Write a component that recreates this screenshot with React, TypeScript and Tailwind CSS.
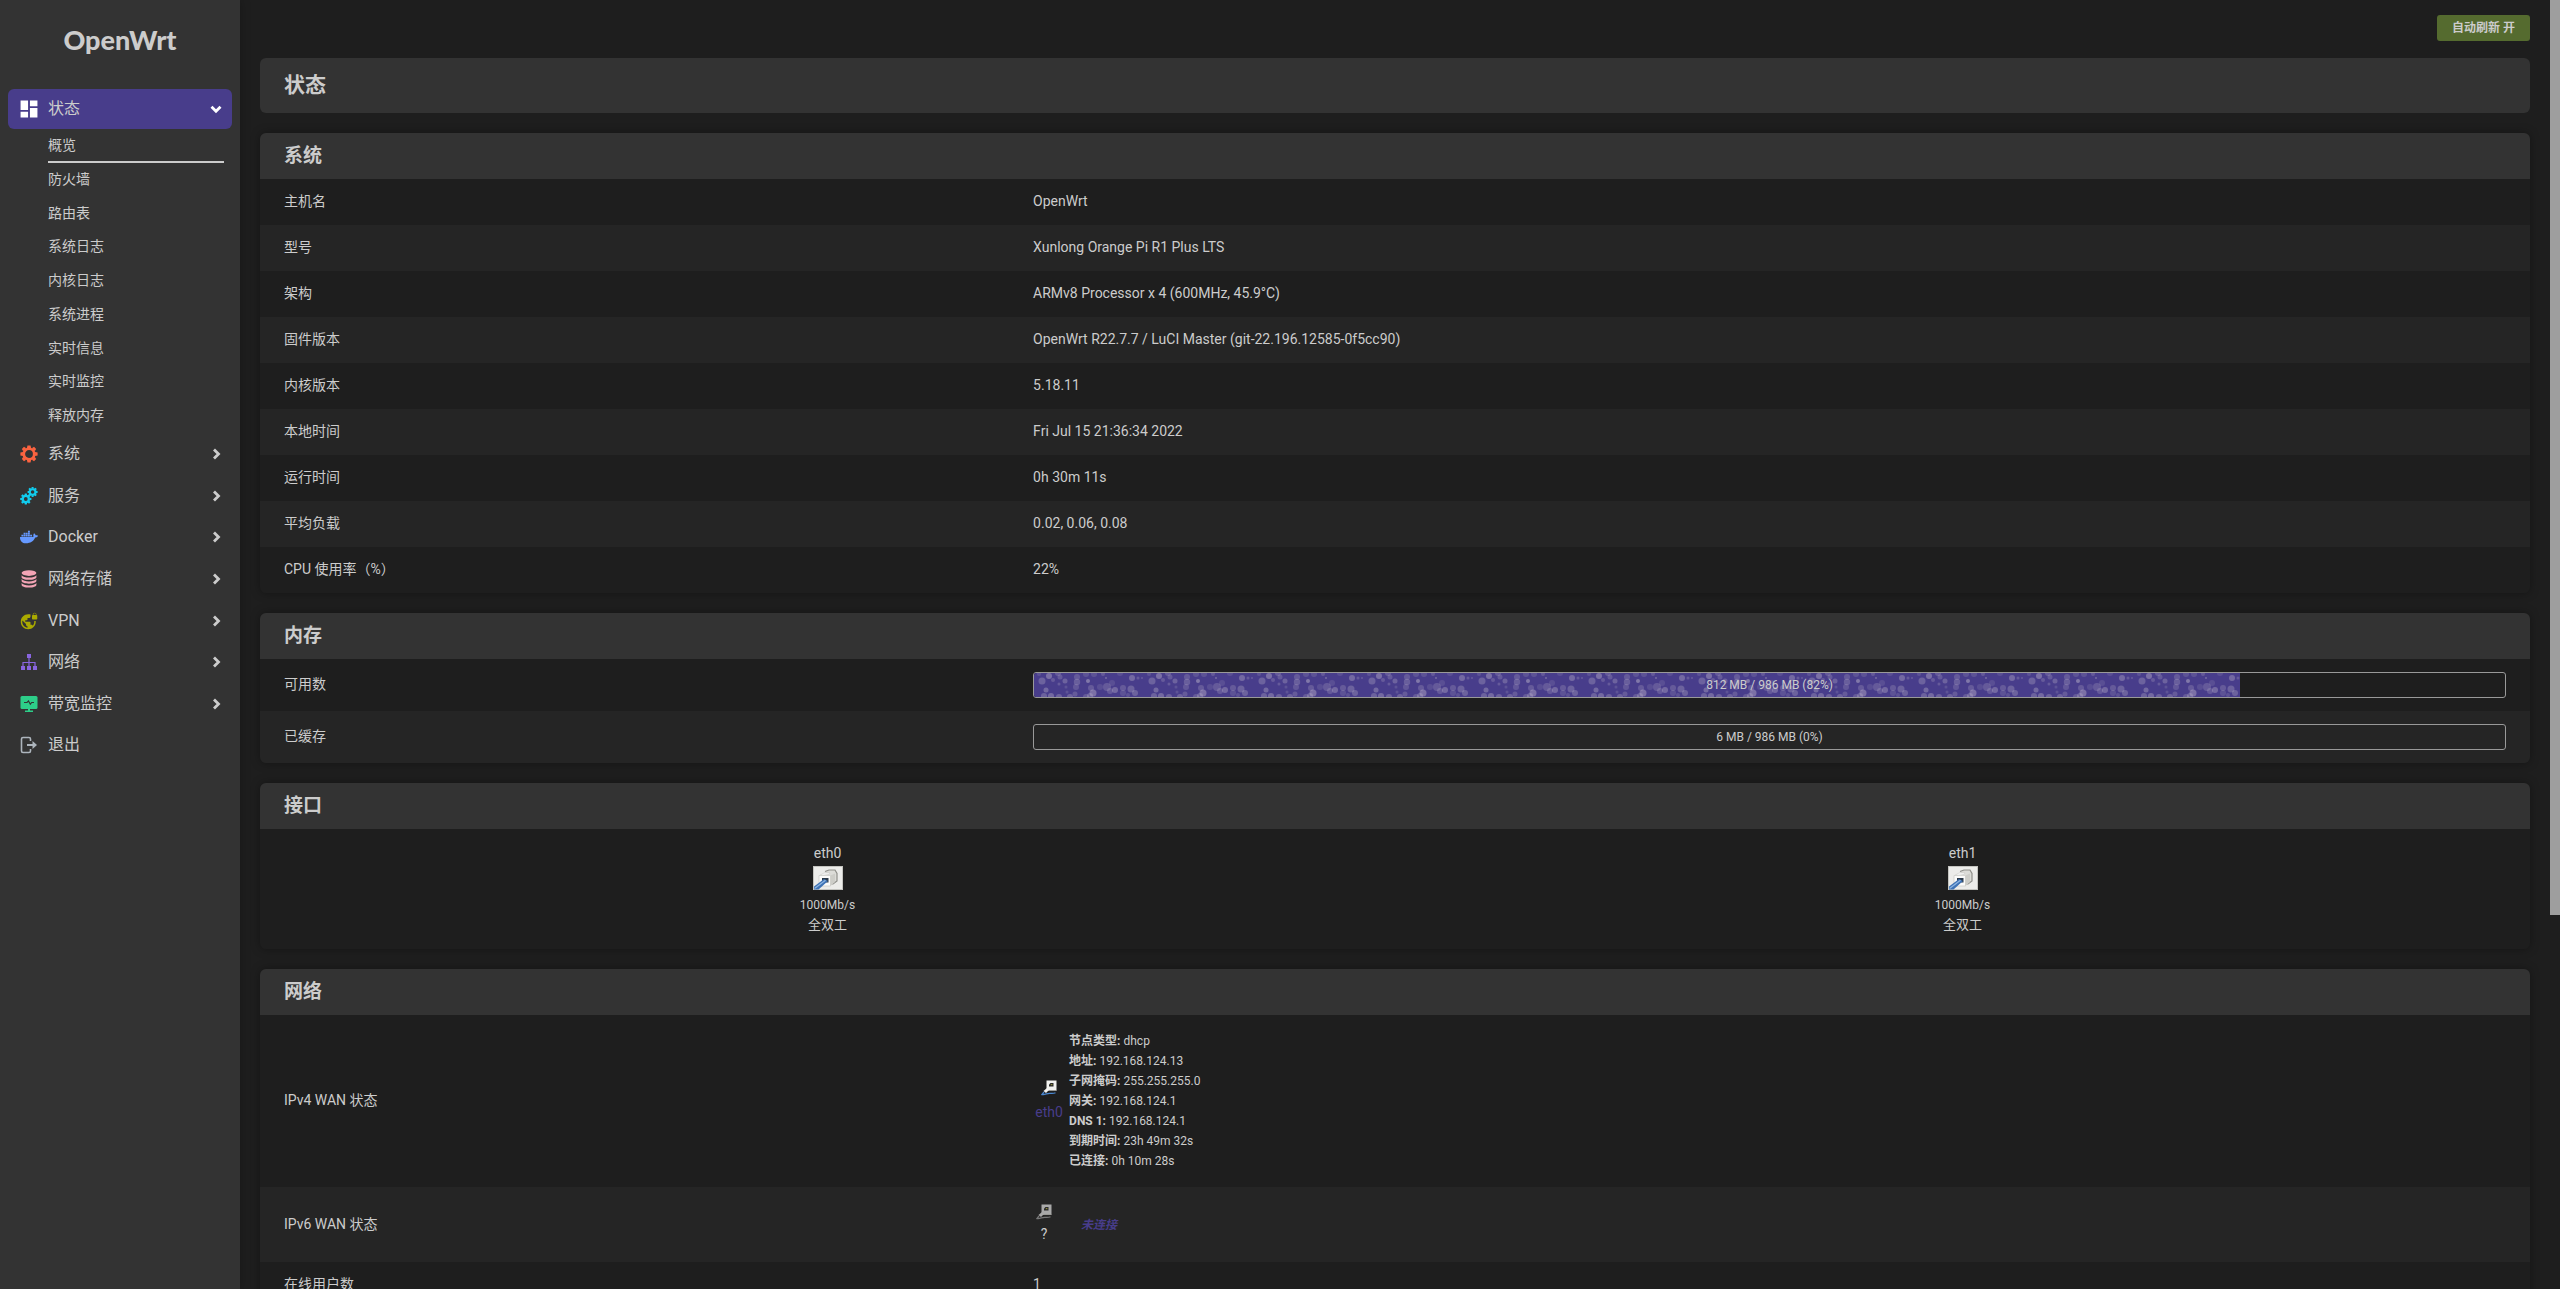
import type { ReactNode } from "react";
import { FaDocker } from "react-icons/fa";
import { MdDashboard, MdVpnLock } from "react-icons/md";

/* ---------- icons ---------- */

const TEETH = [0, 45, 90, 135, 180, 225, 270, 315];

function Cog({ cx, cy, r, hole }: { cx: number; cy: number; r: number; hole: number }) {
  const body = r * 0.76;
  const stroke = body - hole;
  return (
    <g>
      <circle cx={cx} cy={cy} r={hole + stroke / 2} fill="none" stroke="currentColor" strokeWidth={stroke} />
      {TEETH.map((a) => (
        <path
          key={a}
          d={`M${cx - r * 0.24} ${cy - body + 0.5} L${cx - r * 0.18} ${cy - r} H${cx + r * 0.18} L${cx + r * 0.24} ${cy - body + 0.5} Z`}
          transform={`rotate(${a} ${cx} ${cy})`}
          fill="currentColor"
        />
      ))}
    </g>
  );
}

function Svg({ children }: { children: ReactNode }) {
  return (
    <svg viewBox="0 0 18 18" className="size-[18px]" fill="none" aria-hidden="true">
      {children}
    </svg>
  );
}

const SystemIcon = () => (
  <Svg>
    <Cog cx={9} cy={9} r={8.6} hole={3.9} />
  </Svg>
);

const ServicesIcon = () => (
  <Svg>
    <Cog cx={5.8} cy={12} r={5.6} hole={1.9} />
    <Cog cx={12.6} cy={5} r={5} hole={1.8} />
  </Svg>
);

const StorageIcon = () => (
  <Svg>
    <g fill="currentColor">
      <ellipse cx="9" cy="3.1" rx="7.4" ry="2.8" />
      <path d="M1.6 5.2c1 1.7 4 2.4 7.400 2.400s6.400-.7 7.400-2.400v2c0 1.500-3.300 2.600-7.400 2.600s-7.400-1.100-7.400-2.600z" />
      <path d="M1.600 9.100c1 1.700 4 2.400 7.400 2.400s6.400-.7 7.400-2.400v2c0 1.500-3.300 2.600-7.400 2.600s-7.400-1.100-7.400-2.600z" />
      <path d="M1.600 13c1 1.700 4 2.400 7.400 2.400s6.400-.7 7.400-2.400v2c0 1.500-3.300 2.600-7.400 2.600s-7.400-1.100-7.400-2.600z" />
    </g>
  </Svg>
);

const NetworkIcon = () => (
  <Svg>
    <g fill="currentColor">
      <rect x="7" y="1" width="4" height="4" />
      <rect x="1" y="13" width="4" height="4" />
      <rect x="7" y="13" width="4" height="4" />
      <rect x="13" y="13" width="4" height="4" />
    </g>
    <path d="M9 5v8M3 13V9.500h12V13" stroke="currentColor" strokeWidth="1.200" />
  </Svg>
);

const MonitorIcon = () => (
  <Svg>
    <rect x="0.500" y="1" width="17" height="13" rx="1.500" fill="currentColor" />
    <path d="M8 14h2v1.500h3V17H5v-1.500h3z" fill="currentColor" />
    <path d="M4 7.500h3l1.500-1.500 1.800 3.200 1.400-1.700h2.300" stroke="#333333" strokeWidth="1.100" />
  </Svg>
);

const LogoutIcon = () => (
  <Svg>
    <path d="M10.500 5V3q0-1.500-1.500-1.500H3q-1.500 0-1.500 1.500v12q0 1.500 1.500 1.500h6q1.500 0 1.500-1.500v-2" stroke="currentColor" strokeWidth="1.600" />
    <path d="M7 8h5.500V5L17 9l-4.500 4v-3H7z" fill="currentColor" />
  </Svg>
);

function Chevron({ open }: { open?: boolean }) {
  return (
    <svg viewBox="0 0 12 12" className="size-3" fill="none" stroke="currentColor" strokeWidth="2.800" aria-hidden="true">
      {open ? <path d="M1.500 3.700 6 8.200l4.500-4.500" /> : <path d="M4 1.500 8.500 6 4 10.500" />}
    </svg>
  );
}

function PortImage() {
  return (
    <svg viewBox="0 0 30 24" className="h-6 w-[30px]" role="img" aria-label="端口已连接">
      <rect x="0.500" y="0.500" width="29" height="23" fill="#ececea" stroke="#c4c4c0" />
      <path d="M12 5.500 16 4h6l2 3.500V15l-4 3h-3" fill="#dcdcd8" stroke="#8f8f8a" strokeWidth="1.200" />
      <path d="M6.500 9.500 11 7h6l-1 1.500z" fill="#ffffff" stroke="#c8c8c4" strokeWidth="0.600" />
      <path d="M6 9.500h11.500v10.500H6z" fill="#fbfbfa" stroke="#cfcfca" strokeWidth="0.800" />
      <path d="M17.500 9.500 22 7.500v8.500l-4.500 4z" fill="#cdcdc8" />
      <path d="M9 12h6.500v4.500H9z" fill="#2c3a4a" />
      <path d="M1 20.500 11 13l4 2-9.500 8.500H1z" fill="#3f73b5" />
      <path d="M1.500 22.500 12.500 14.200" stroke="#8db4e2" strokeWidth="1.300" />
    </svg>
  );
}

function EthernetIcon({ active }: { active: boolean }) {
  const cable = active ? "#4a86cf" : "#777777";
  const light = active ? "#f2f2f0" : "#a9a9a9";
  return (
    <svg viewBox="0 0 16 16" className="size-4" fill="none" aria-hidden="true">
      <rect x="5.500" y="0.500" width="10" height="10" fill={light} />
      <path d="M5.500 10.500h10" stroke="#9a9a96" />
      <path d="M8 4.500 9.500 3h3v3.500H8z" fill="#2a2a2a" />
      <path d="M9.800 4h1.600v1.200H9.800z" fill="#8c8a3a" />
      <path d="m2.500 11 3.500-3 2.500 1.500-3.500 3.500z" fill={light} />
      <path d="M3 12 1 14.500c3 .8 5-1.500 8-1.200s4 .2 5.500-.6" stroke={cable} strokeWidth="1.300" />
    </svg>
  );
}

/* ---------- sidebar ---------- */

const STATUS_PAGES = ["防火墙", "路由表", "系统日志", "内核日志", "系统进程", "实时信息", "实时监控", "释放内存"];

const MENU = [
  { label: "系统", color: "text-[#fb6340]", icon: <SystemIcon /> },
  { label: "服务", color: "text-[#11cdef]", icon: <ServicesIcon /> },
  { label: "Docker", color: "text-[#6699ff]", icon: <FaDocker className="size-[18px]" /> },
  { label: "网络存储", color: "text-[#f3a4b5]", icon: <StorageIcon /> },
  { label: "VPN", color: "text-[#aaaa00]", icon: <MdVpnLock className="size-[18px]" /> },
  { label: "网络", color: "text-[#8965e0]", icon: <NetworkIcon /> },
  { label: "带宽监控", color: "text-[#2dce89]", icon: <MonitorIcon /> },
];

function Sidebar() {
  return (
    <aside className="flex w-60 shrink-0 flex-col bg-[#333333] px-2 shadow-[0_0_10px_rgba(0,0,0,0.25)]">
      <a href="#home" className="flex h-[89px] items-center justify-center pb-2.5 font-['Lato'] text-[27px] leading-8 font-black text-[#cccccc]">
        OpenWrt
      </a>
      <nav>
        <button type="button" aria-expanded="true" className="flex h-10 w-full items-center rounded-md bg-[#483d8b] pr-2.5 pl-3">
          <MdDashboard className="size-[18px] scale-125 text-white" />
          <span className="ml-2.5 flex-1 text-left text-base">状态</span>
          <span className="text-white">
            <Chevron open />
          </span>
        </button>
        <ul className="pr-2 pl-10 text-sm">
          <li>
            <a href="#overview" aria-current="page" className="flex h-[34px] items-center border-b-2 border-[#cccccc]">
              概览
            </a>
          </li>
          <li>
            <ul className="grid h-[270px] auto-rows-fr">
              {STATUS_PAGES.map((page) => (
                <li key={page} className="flex items-center pb-0.5">
                  <a href={`#${page}`}>{page}</a>
                </li>
              ))}
            </ul>
          </li>
        </ul>
        <ul className="grid h-[333px] auto-rows-fr text-base">
          {MENU.map((item) => (
            <li key={item.label}>
              <button type="button" aria-expanded="false" className="flex h-[42px] w-full items-center pr-2.5 pl-3">
                <span className={item.color}>{item.icon}</span>
                <span className="ml-2.5 flex-1 text-left">{item.label}</span>
                <Chevron />
              </button>
            </li>
          ))}
          <li>
            <a href="#logout" className="flex h-[42px] items-center pr-2.5 pl-3">
              <span className="text-[#adb5bd]">
                <LogoutIcon />
              </span>
              <span className="ml-2.5">退出</span>
            </a>
          </li>
        </ul>
      </nav>
    </aside>
  );
}

/* ---------- content ---------- */

function Card({ title, children }: { title: string; children: ReactNode }) {
  return (
    <section className="shrink-0 overflow-hidden rounded-md shadow-[0_0_10px_rgba(0,0,0,0.35)]">
      <h3 className="flex h-[46px] items-center bg-[#333333] px-6 text-[19px] font-bold">{title}</h3>
      {children}
    </section>
  );
}

function InfoTable({ children }: { children: ReactNode }) {
  return (
    <table className="w-full table-fixed text-sm">
      <tbody>{children}</tbody>
    </table>
  );
}

function Row({ label, height = "h-[46px]", children }: { label: string; height?: string; children: ReactNode }) {
  return (
    <tr className={`${height} bg-[#1e1e1e] even:bg-[#252525]`}>
      <th scope="row" className="w-[33%] px-6 pb-0.5 text-left font-normal">
        {label}
      </th>
      <td className="px-6">{children}</td>
    </tr>
  );
}

const SYSTEM_INFO = [
  ["主机名", "OpenWrt"],
  ["型号", "Xunlong Orange Pi R1 Plus LTS"],
  ["架构", "ARMv8 Processor x 4 (600MHz, 45.9°C)"],
  ["固件版本", "OpenWrt R22.7.7 / LuCI Master (git-22.196.12585-0f5cc90)"],
  ["内核版本", "5.18.11"],
  ["本地时间", "Fri Jul 15 21:36:34 2022"],
  ["运行时间", "0h 30m 11s"],
  ["平均负载", "0.02, 0.06, 0.08"],
  ["CPU 使用率（%）", "22%"],
];

/* x, y, radius, opacity of each bubble in one 110px tile */
const BUBBLES = [
  [8, 8, 3.5, 0.25], [15, 3, 3, 0.35], [12, 17, 2.5, 0.3], [19, 7, 2, 0.2], [26, 4, 2.5, 0.2], [31, 8, 2.5, 0.25],
  [25, 11, 1.5, 0.2], [43, 4, 3, 0.2], [43, 9, 3.2, 0.22], [42, 14, 3, 0.18], [32, 14, 1.5, 0.15], [33, 19, 1.5, 0.15],
  [41, 21, 2.5, 0.2], [54, 8, 2, 0.4], [57, 15, 3, 0.2], [59, 20, 3.5, 0.35], [56, 23, 3, 0.25], [52, 24, 3, 0.2],
  [66, 14, 3, 0.12], [73, 14, 4, 0.2], [78, 10, 3, 0.12], [81, 17, 3, 0.3], [76, 18, 3, 0.2], [89, 15, 3, 0.2],
  [98, 5, 3, 0.3], [97, 16, 3.5, 0.25], [101, 20, 3, 0.25], [89, 20, 3, 0.15], [94, 22, 2, 0.15], [104, 5, 1.5, 0.2],
  [108, 5, 1, 0.2], [10, 23, 3, 0.25], [17, 23, 3, 0.3], [25, 24, 3, 0.25], [36, 24, 3, 0.25], [24, 0, 3, 0.2],
  [60, 1, 3, 0.15], [52, 1, 3, 0.15], [69, 1, 2, 0.2], [72, 5, 1, 0.3], [5, 1, 2, 0.15], [86, 0, 3, 0.12],
];

function Progress({ percent, label }: { percent: number; label: string }) {
  return (
    <div
      role="progressbar"
      aria-valuenow={percent}
      aria-valuemin={0}
      aria-valuemax={100}
      aria-label={label}
      className="relative h-[26px] overflow-hidden rounded-[3px] border border-[#999999]"
    >
      <div className="h-full bg-[#483d8b]" style={{ width: `${percent}%` }}>
        {percent > 0 && (
          <svg className="size-full" aria-hidden="true">
            <defs>
              <pattern id="bubbles" width="110" height="24" patternUnits="userSpaceOnUse">
                {BUBBLES.map(([x, y, r, o]) => (
                  <circle key={`${x}-${y}`} cx={x} cy={y} r={r} fill="#d8cfd8" fillOpacity={o} />
                ))}
              </pattern>
            </defs>
            <rect width="100%" height="100%" fill="url(#bubbles)" />
          </svg>
        )}
      </div>
      <span className="absolute inset-0 flex items-center justify-center text-xs">{label}</span>
    </div>
  );
}

const WAN_DETAILS = [
  ["节点类型:", "dhcp"],
  ["地址:", "192.168.124.13"],
  ["子网掩码:", "255.255.255.0"],
  ["网关:", "192.168.124.1"],
  ["DNS 1:", "192.168.124.1"],
  ["到期时间:", "23h 49m 32s"],
  ["已连接:", "0h 10m 28s"],
];

export default function App() {
  return (
    <div className="flex h-screen overflow-hidden bg-[#1e1e1e] font-['Roboto','Noto_Sans_CJK_SC',sans-serif] text-[#cccccc]">
      <Sidebar />
      <main className="flex min-w-0 flex-1 flex-col gap-5 px-5">
        <div className="-mb-5 flex h-[58px] shrink-0 items-start justify-end pt-[15px]">
          <button type="button" className="h-[26px] rounded-[3px] bg-[#556b2f] px-[15px] text-xs font-bold">
            自动刷新 开
          </button>
        </div>
        <h2 className="flex h-[55px] shrink-0 items-center rounded-md bg-[#333333] px-6 text-[21px] font-bold">状态</h2>

        <Card title="系统">
          <InfoTable>
            {SYSTEM_INFO.map(([label, value]) => (
              <Row key={label} label={label}>
                <p className="pb-0.5">{value}</p>
              </Row>
            ))}
          </InfoTable>
        </Card>

        <Card title="内存">
          <InfoTable>
            <Row label="可用数" height="h-[52px]">
              <Progress percent={82} label="812 MB / 986 MB (82%)" />
            </Row>
            <Row label="已缓存" height="h-[52px]">
              <Progress percent={0} label="6 MB / 986 MB (0%)" />
            </Row>
          </InfoTable>
        </Card>

        <Card title="接口">
          <div className="grid grid-cols-2 bg-[#1e1e1e] py-3.5 text-center text-[13px] leading-5">
            {["eth0", "eth1"].map((port) => (
              <div key={port}>
                <p className="text-sm leading-5">{port}</p>
                <div className="flex h-8 items-center justify-center pb-0.5">
                  <PortImage />
                </div>
                <p className="text-xs leading-5">1000Mb/s</p>
                <p>全双工</p>
              </div>
            ))}
          </div>
        </Card>

        <Card title="网络">
          <InfoTable>
            <Row label="IPv4 WAN 状态" height="h-[172px]">
              <div className="flex items-center gap-1.5">
                <div className="flex w-[30px] flex-col items-center gap-1.5 pl-0.5 text-[#483d8b]">
                  <EthernetIcon active />
                  <a href="#eth0">eth0</a>
                </div>
                <ul className="text-xs leading-5">
                  {WAN_DETAILS.map(([name, value]) => (
                    <li key={name}>
                      <strong>{name}</strong> {value}
                    </li>
                  ))}
                </ul>
              </div>
            </Row>
            <Row label="IPv6 WAN 状态" height="h-[75px]">
              <div className="flex items-center gap-[26px]">
                <div className="flex w-[22px] flex-col items-center gap-1 pb-0.5">
                  <EthernetIcon active={false} />
                  <span>?</span>
                </div>
                <em className="text-xs font-bold text-[#483d8b]">未连接</em>
              </div>
            </Row>
            <Row label="在线用户数">
              <p className="pb-0.5">1</p>
            </Row>
          </InfoTable>
        </Card>
      </main>
      <div className="w-2.5 shrink-0" aria-hidden="true">
        <div className="h-[71%] bg-[#9e9e9e]" />
      </div>
    </div>
  );
}
